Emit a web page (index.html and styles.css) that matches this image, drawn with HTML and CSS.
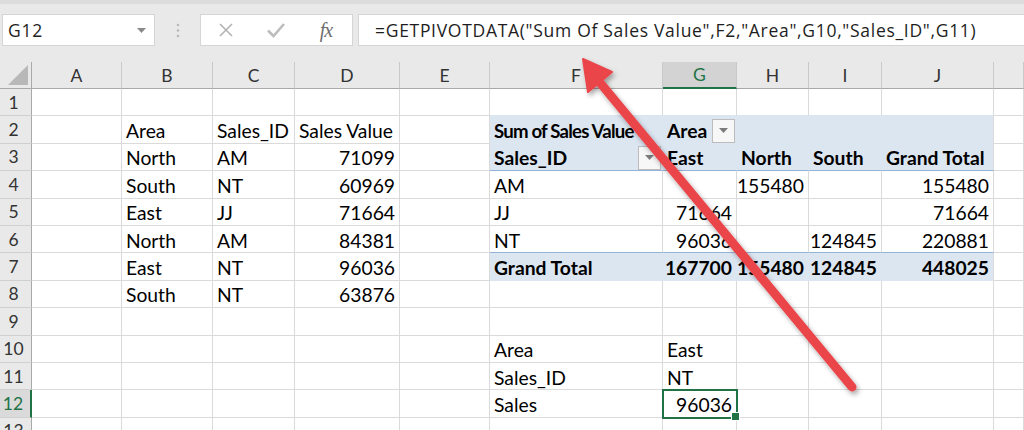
FILE: index.html
```html
<!DOCTYPE html>
<html>
<head>
<meta charset="utf-8">
<link rel="stylesheet" href="styles.css">
</head>
<body>
<div class="app">
  <div class="fbar">
    <div class="namebox"><span>G12</span><svg class="caret" width="9" height="5" viewBox="0 0 9 5"><path d="M0 0h9L4.5 5z" fill="#8a8a8a"/></svg></div>
    <div class="grip"><svg width="4" height="15" viewBox="0 0 4 15"><circle cx="2" cy="2" r="1.3" fill="#b9b9b9"/><circle cx="2" cy="7.5" r="1.3" fill="#b9b9b9"/><circle cx="2" cy="13" r="1.3" fill="#b9b9b9"/></svg></div>
    <div class="fxbox">
      <span class="fbtn"><svg width="16" height="16" viewBox="0 0 16 16"><path d="M2 2L14 14M14 2L2 14" stroke="#b3b3b3" stroke-width="1.6" fill="none"/></svg></span>
      <span class="fbtn"><svg width="20" height="16" viewBox="0 0 20 16"><path d="M2 8.5L7.5 14L18 2" stroke="#bdbdbd" stroke-width="2.6" fill="none"/></svg></span>
      <span class="fbtn fx">fx</span>
    </div>
    <div class="formula">=GETPIVOTDATA("Sum Of Sales Value",F2,"Area",G10,"Sales_ID",G11)</div>
  </div>

  <div class="sheet">
    <!-- header -->
    <div class="corner"><svg width="20" height="20" viewBox="0 0 20 20"><path d="M20 0V20H0z" fill="#b8b8b8"/></svg></div>
    <div class="ch">A</div><div class="ch">B</div><div class="ch">C</div><div class="ch">D</div><div class="ch">E</div><div class="ch">F</div><div class="ch chs">G</div><div class="ch">H</div><div class="ch">I</div><div class="ch">J</div><div class="ch"></div>
    <!-- 1 -->
    <div class="rh">1</div><div class="c"></div><div class="c"></div><div class="c"></div><div class="c"></div><div class="c"></div><div class="c pt"></div><div class="c pt"></div><div class="c pt"></div><div class="c pt"></div><div class="c pt"></div><div class="c"></div>
    <!-- 2 -->
    <div class="rh">2</div><div class="c"></div><div class="c">Area</div><div class="c">Sales_ID</div><div class="c">Sales Value</div><div class="c"></div><div class="c p b tight">Sum of Sales Value</div><div class="c p b dd">Area<span class="ddb"><svg width="9" height="5" viewBox="0 0 9 5"><path d="M0 0h9L4.5 5z" fill="#7b7b7b"/></svg></span></div><div class="c p"></div><div class="c p"></div><div class="c p pe"></div><div class="c"></div>
    <!-- 3 -->
    <div class="rh">3</div><div class="c"></div><div class="c">North</div><div class="c">AM</div><div class="c n">71099</div><div class="c"></div><div class="c p b pl dd">Sales_ID<span class="ddb"><svg width="9" height="5" viewBox="0 0 9 5"><path d="M0 0h9L4.5 5z" fill="#7b7b7b"/></svg></span></div><div class="c p b pl">East</div><div class="c p b pl">North</div><div class="c p b pl">South</div><div class="c p b pl pe">Grand Total</div><div class="c"></div>
    <!-- 4 -->
    <div class="rh">4</div><div class="c"></div><div class="c">South</div><div class="c">NT</div><div class="c n">60969</div><div class="c"></div><div class="c">AM</div><div class="c n"></div><div class="c n">155480</div><div class="c n"></div><div class="c n">155480</div><div class="c"></div>
    <!-- 5 -->
    <div class="rh">5</div><div class="c"></div><div class="c">East</div><div class="c">JJ</div><div class="c n">71664</div><div class="c"></div><div class="c">JJ</div><div class="c n">71664</div><div class="c n"></div><div class="c n"></div><div class="c n">71664</div><div class="c"></div>
    <!-- 6 -->
    <div class="rh">6</div><div class="c"></div><div class="c">North</div><div class="c">AM</div><div class="c n">84381</div><div class="c"></div><div class="c pl">NT</div><div class="c n pl">96036</div><div class="c n pl"></div><div class="c n pl">124845</div><div class="c n pl">220881</div><div class="c"></div>
    <!-- 7 -->
    <div class="rh">7</div><div class="c"></div><div class="c">East</div><div class="c">NT</div><div class="c n">96036</div><div class="c"></div><div class="c p b">Grand Total</div><div class="c p b n">167700</div><div class="c p b n">155480</div><div class="c p b n">124845</div><div class="c p b n pe">448025</div><div class="c"></div>
    <!-- 8 -->
    <div class="rh">8</div><div class="c"></div><div class="c">South</div><div class="c">NT</div><div class="c n">63876</div><div class="c"></div><div class="c"></div><div class="c"></div><div class="c"></div><div class="c"></div><div class="c"></div><div class="c"></div>
    <!-- 9 -->
    <div class="rh">9</div><div class="c"></div><div class="c"></div><div class="c"></div><div class="c"></div><div class="c"></div><div class="c"></div><div class="c"></div><div class="c"></div><div class="c"></div><div class="c"></div><div class="c"></div>
    <!-- 10 -->
    <div class="rh">10</div><div class="c"></div><div class="c"></div><div class="c"></div><div class="c"></div><div class="c"></div><div class="c">Area</div><div class="c">East</div><div class="c"></div><div class="c"></div><div class="c"></div><div class="c"></div>
    <!-- 11 -->
    <div class="rh">11</div><div class="c"></div><div class="c"></div><div class="c"></div><div class="c"></div><div class="c"></div><div class="c">Sales_ID</div><div class="c">NT</div><div class="c"></div><div class="c"></div><div class="c"></div><div class="c"></div>
    <!-- 12 -->
    <div class="rh rhs">12</div><div class="c"></div><div class="c"></div><div class="c"></div><div class="c"></div><div class="c"></div><div class="c">Sales</div><div class="c n sel">96036</div><div class="c"></div><div class="c"></div><div class="c"></div><div class="c"></div>
    <!-- 13 -->
    <div class="rh">13</div><div class="c"></div><div class="c"></div><div class="c"></div><div class="c"></div><div class="c"></div><div class="c"></div><div class="c"></div><div class="c"></div><div class="c"></div><div class="c"></div><div class="c"></div>
  </div>

  <svg class="arrow" width="1024" height="430" viewBox="0 0 1024 430">
    <defs>
      <filter id="sh" x="-20%" y="-20%" width="140%" height="140%">
        <feDropShadow dx="2" dy="3" stdDeviation="2.5" flood-color="#000" flood-opacity="0.35"/>
      </filter>
    </defs>
    <g filter="url(#sh)" fill="#ea4449" stroke="#ea4449">
      <line x1="852" y1="387" x2="597" y2="79" stroke-width="9" stroke-linecap="round"/>
      <polygon points="583,59 588,92 612,72" stroke-width="2" stroke-linejoin="round"/>
    </g>
  </svg>
</div>
</body>
</html>
```
FILE: styles.css
```css
* { box-sizing: border-box; margin: 0; padding: 0; }

body {
  width: 1024px;
  height: 430px;
  overflow: hidden;
  background: #fff;
  font-family: Lato, "Liberation Sans", sans-serif;
}

.app {
  position: relative;
  width: 1024px;
  height: 430px;
  overflow: hidden;
}

/* formula bar */
.fbar {
  height: 62px;
  background: #e9e9e9;
  border-top: 4px solid #dcdcdc;
  display: flex;
  align-items: flex-start;
  padding: 10px 0 0 2px;
}

.namebox {
  width: 153px;
  height: 32px;
  background: #fff;
  border: 1px solid #d5d5d5;
  display: flex;
  align-items: center;
  padding: 0 8px 0 5px;
  font: 17.5px "Open Sans", sans-serif;
  letter-spacing: 0.7px;
  color: #1e1e1e;
}

.caret { margin-left: auto; }

.grip {
  width: 45px;
  height: 32px;
  display: flex;
  align-items: center;
  justify-content: center;
}

.fxbox {
  width: 153px;
  height: 32px;
  background: #fff;
  border: 1px solid #d5d5d5;
  display: flex;
  align-items: center;
}

.fbtn {
  width: 50px;
  display: flex;
  justify-content: center;
  align-items: center;
}

.fx {
  font: italic 20px "Liberation Serif", serif;
  color: #6e6e6e;
  letter-spacing: -1px;
}

.formula {
  flex: 1;
  height: 32px;
  margin-left: 5px;
  background: #fff;
  border: 1px solid #d5d5d5;
  border-right: none;
  display: flex;
  align-items: center;
  padding-left: 16px;
  font: 17.5px "Open Sans", sans-serif;
  letter-spacing: 0.7px;
  color: #1e1e1e;
  white-space: nowrap;
}

/* sheet */
.sheet {
  display: grid;
  grid-template-columns: 32px 90px 91px 82px 105px 90px 173px 74px 72px 73px 112px 1fr;
  grid-template-rows: 27px repeat(13, 27.4px);
  background: #fff;
}

.corner {
  background: #e9e9e9;
  border-right: 1px solid #a9a9a9;
  border-bottom: 1px solid #a9a9a9;
  display: flex;
  align-items: flex-end;
  justify-content: flex-end;
  padding: 0 3px 3px 0;
}

.ch {
  background: #e9e9e9;
  border-right: 1px solid #c9c9c9;
  border-bottom: 1px solid #a9a9a9;
  display: flex;
  align-items: center;
  justify-content: center;
  font-size: 17.5px;
  color: #333;
}

.chs {
  background: #d3d3d3;
  color: #217346;
  border-bottom: 2px solid #217346;
}

.rh {
  background: #e9e9e9;
  border-right: 1px solid #a9a9a9;
  border-bottom: 1px solid #d0d0d0;
  display: flex;
  align-items: center;
  justify-content: center;
  padding-right: 4px;
  font-size: 17.5px;
  color: #333;
}

.rhs {
  background: #dadada;
  color: #217346;
  border-right: 2px solid #217346;
}

.c {
  border-right: 1px solid #dadada;
  border-bottom: 1px solid #dadada;
  display: flex;
  align-items: center;
  padding: 2px 4px 0;
  font-size: 19.3px;
  color: #000;
  white-space: nowrap;
  overflow: hidden;
}

.n { justify-content: flex-end; }

.b { font-weight: 700; }

.tight { font-size: 18.6px; letter-spacing: -0.8px; }

.p {
  background: #dce6f1;
  border-right-color: #dce6f1;
  border-bottom-color: #dce6f1;
}

.pe { border-right-color: #dadada; }

.pt { border-bottom-color: #dce6f1; }

.pl { border-bottom-color: #95b3d7; }

.dd { padding-right: 1px; overflow: visible; }

.ddb {
  margin-left: auto;
  width: 23px;
  height: 24px;
  background: #f7f7f7;
  border: 1px solid #bdbdbd;
  display: flex;
  align-items: center;
  justify-content: center;
}

.sel {
  position: relative;
  overflow: visible;
  outline: 2px solid #217346;
  outline-offset: -1px;
}

.sel::after {
  content: "";
  position: absolute;
  right: -4px;
  bottom: -4px;
  width: 7px;
  height: 7px;
  background: #217346;
  border: 1px solid #fff;
}

/* annotation arrow */
.arrow {
  position: absolute;
  left: 0;
  top: 0;
  pointer-events: none;
}
```
